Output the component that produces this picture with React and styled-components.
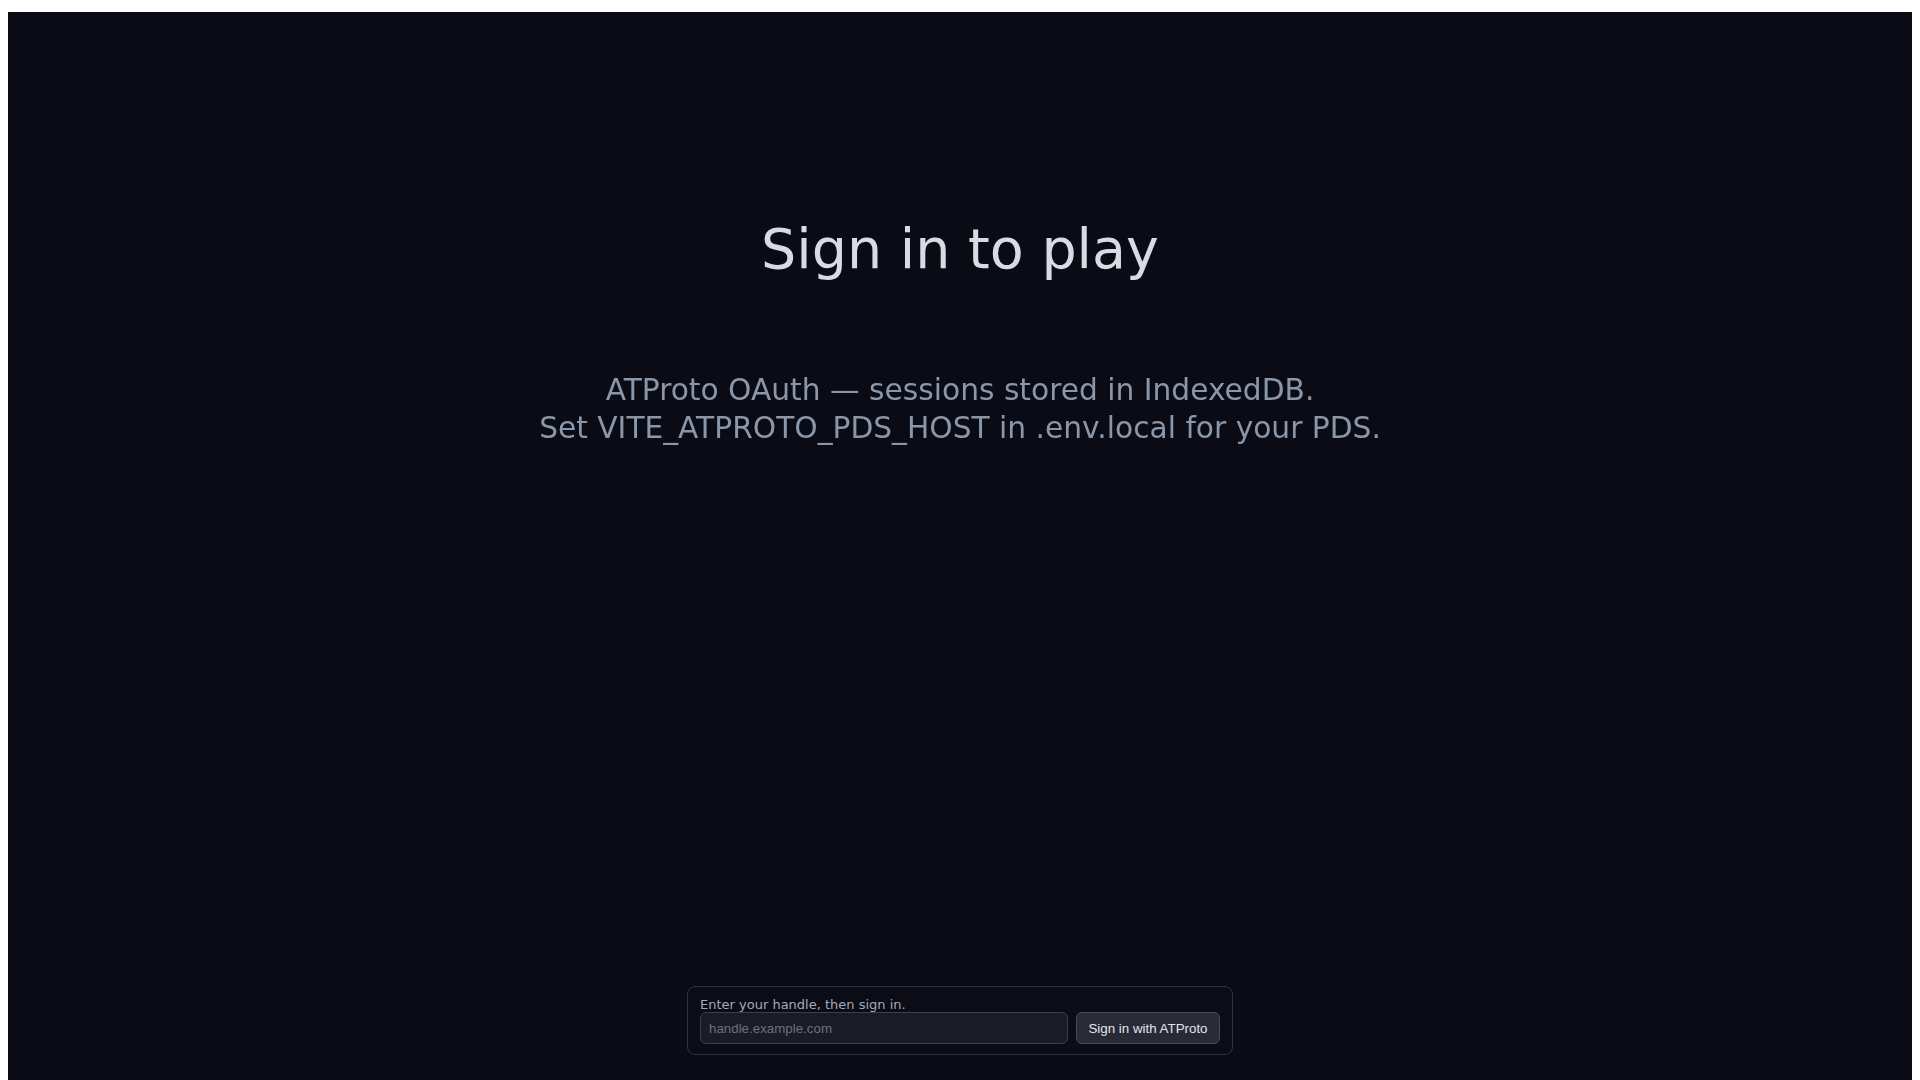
import React from "react";
import styled, { createGlobalStyle } from "styled-components";

const Global = createGlobalStyle`
  html, body { background: #ffffff; }
  body {
    margin: 12px 8px 0 8px;
    font-family: "DejaVu Sans", sans-serif;
  }
`;

const Stage = styled.div`
  height: calc(100vh - 12px);
  background: #0a0b14;
  display: flex;
  flex-direction: column;
  align-items: center;
  padding: 204px 0 25px;
  box-sizing: border-box;
  overflow: hidden;
`;

const Title = styled.h1`
  margin: 0;
  font-family: "DejaVu Sans", sans-serif;
  font-weight: 400;
  font-size: 55.5px;
  line-height: normal;
  color: #d9dbe4;
  filter: blur(0.6px);
  text-align: center;
`;

const Subtitle = styled.p`
  margin: 90px 0 0;
  font-family: "DejaVu Sans", sans-serif;
  font-size: 29.7px;
  line-height: 38px;
  color: #8a96a9;
  filter: blur(0.6px);
  text-align: center;
`;

const Panel = styled.form`
  margin-top: auto;
  width: 520px;
  padding: 10px 12px;
  border: 1px solid #2c3441;
  border-radius: 8px;
  background: #0b0c15;
  display: flex;
  flex-direction: column;
`;

const Label = styled.label`
  font-family: "DejaVu Sans", sans-serif;
  font-size: 13px;
  line-height: 15px;
  color: #a3abb9;
`;

const Row = styled.div`
  display: flex;
  gap: 8px;
`;

const Input = styled.input`
  flex: 1;
  min-width: 0;
  height: 32px;
  box-sizing: border-box;
  padding: 0 8px;
  border: 1px solid #38414f;
  border-radius: 6px;
  background: #1a1b24;
  color: #e0e2ea;
  font-family: "Liberation Sans", Arial, sans-serif;
  font-size: 13.33px;
  outline: none;
  &::placeholder { color: #6c717e; }
`;

const Button = styled.button`
  width: 144px;
  height: 32px;
  box-sizing: border-box;
  padding: 0 10px;
  border: 1px solid #454d5b;
  border-radius: 6px;
  background: #282a36;
  color: #e2e4ec;
  font-family: "Liberation Sans", Arial, sans-serif;
  font-size: 13.33px;
  cursor: pointer;
`;

export default function App() {
  return (
    <>
      <Global />
      <Stage>
        <Title>Sign in to play</Title>
        <Subtitle>
          ATProto OAuth — sessions stored in IndexedDB.
          <br />
          Set VITE_ATPROTO_PDS_HOST in .env.local for your PDS.
        </Subtitle>
        <Panel onSubmit={(e) => e.preventDefault()}>
          <Label htmlFor="handle">Enter your handle, then sign in.</Label>
          <Row>
            <Input id="handle" placeholder="handle.example.com" />
            <Button type="submit">Sign in with ATProto</Button>
          </Row>
        </Panel>
      </Stage>
    </>
  );
}
